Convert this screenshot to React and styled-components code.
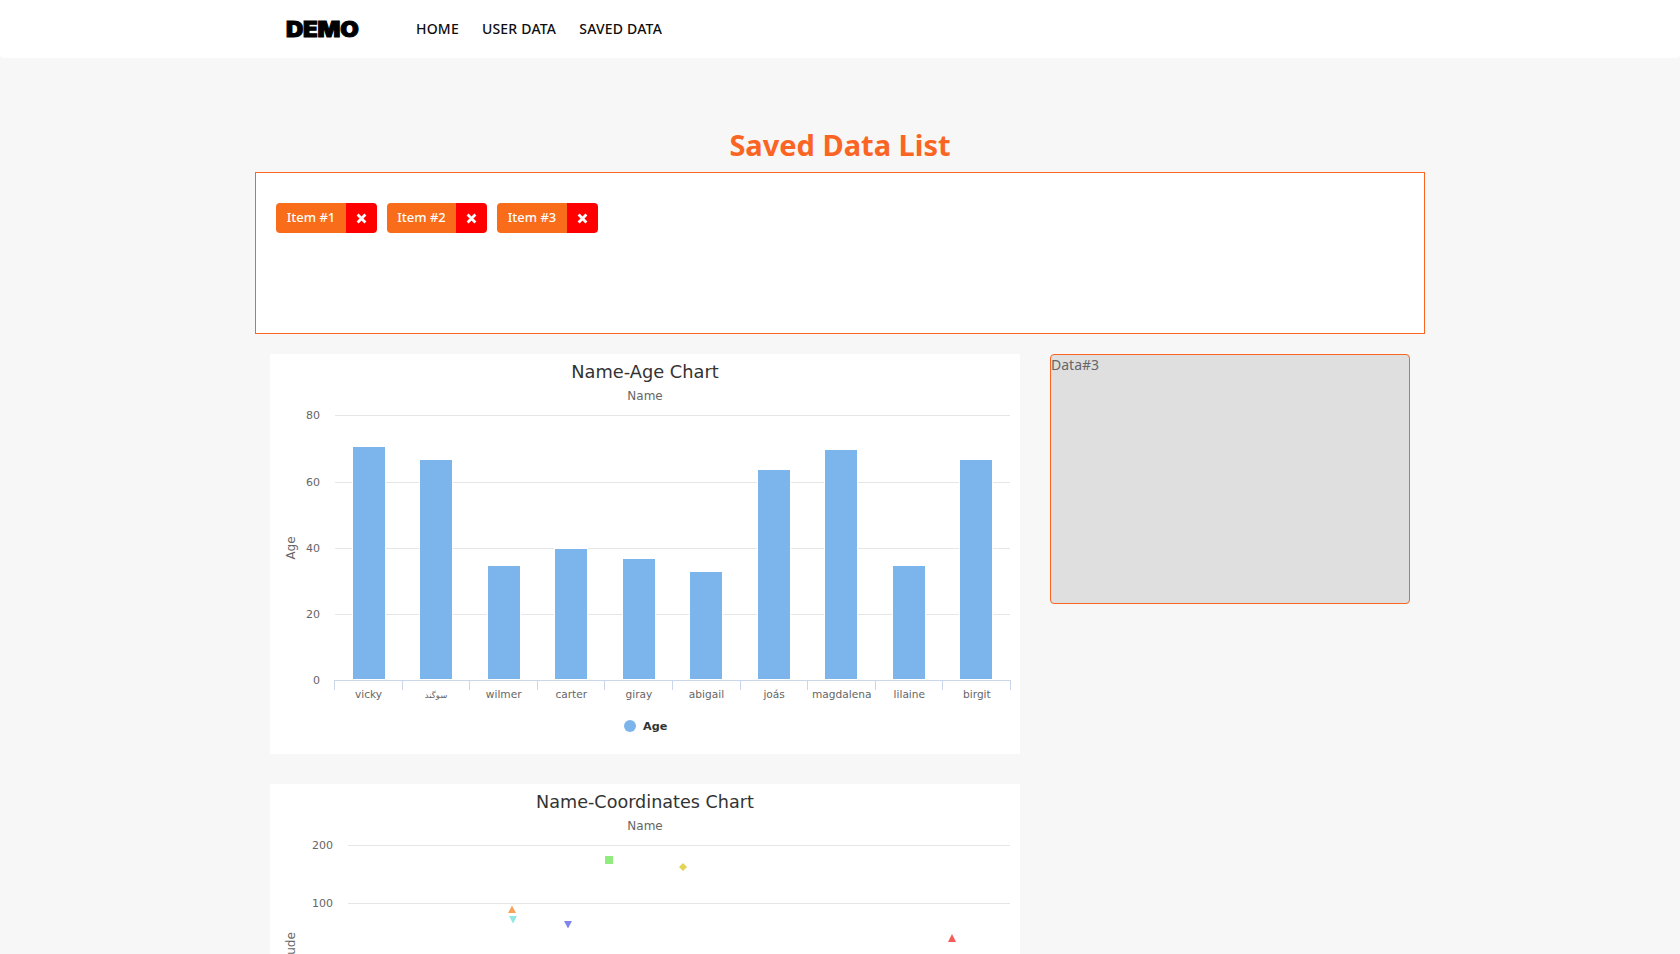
import React from 'react';
import styled, { createGlobalStyle } from 'styled-components';

const Global = createGlobalStyle`
  html { scrollbar-width: none; }
  html::-webkit-scrollbar { display: none; }
  body { margin: 0; background: #f7f7f7; font-family: "Noto Sans", "Open Sans", sans-serif; }
`;

const Navbar = styled.nav`
  height: 58px;
  background: #fff;
  border-radius: 0 0 4px 4px;
`;
const NavInner = styled.div`
  width: 1170px;
  height: 100%;
  margin: 0 auto;
  display: flex;
  align-items: center;
`;
const Brand = styled.div`
  width: 149.5px;
  padding: 2px 0 0 31px;
  box-sizing: border-box;
  font-family: "Inter", sans-serif;
  font-weight: 900;
  font-size: 21px;
  line-height: 22px;
  letter-spacing: -0.2px;
  color: #000;
  -webkit-text-stroke: 1px #000;
  transform-origin: 31px 50%;
  transform: scaleX(1.14);
`;
const NavLink = styled.a`
  padding: 0 11.5px 2px;
  font-size: 14px;
  font-weight: 500;
  letter-spacing: 0.2px;
  color: #0d0d0d;
  white-space: nowrap;
`;
const Container = styled.main`
  width: 1170px;
  margin: 0 auto;
`;
const Title = styled.h1`
  margin: 0;
  padding-top: 64px;
  height: 50px;
  text-align: center;
  font-size: 29px;
  line-height: 46px;
  font-weight: 700;
  color: #fb6524;
  box-sizing: content-box;
`;
const ListBox = styled.section`
  border: 1px solid #fb6524;
  background: #fff;
  padding: 30px 20px;
  box-sizing: border-box;
  height: 162px;
  display: flex;
  align-items: flex-start;
  gap: 10px;
`;
const Chip = styled.div`
  display: flex;
  height: 30px;
  border-radius: 4px;
  overflow: hidden;
`;
const ChipLabel = styled.span`
  width: ${(p) => p.$w}px;
  background: #f86c1a;
  color: #fff;
  font-size: 13px;
  font-weight: 500;
  line-height: 29px;
  text-align: center;
`;
const ChipClose = styled.span`
  width: 31px;
  background: #ff0000;
  display: flex;
  align-items: center;
  justify-content: center;
`;
const Row = styled.div`
  display: flex;
  margin-top: 20px;
  padding: 0 15px;
  gap: 30px;
  align-items: flex-start;
`;
const Charts = styled.div`
  width: 750px;
  display: flex;
  flex-direction: column;
  gap: 30px;
`;
const ChartCard = styled.div`
  height: 400px;
  background: #fff;
  svg { display: block; }
  text { font-family: "DejaVu Sans", sans-serif; }
`;
const DataBox = styled.aside`
  width: 360px;
  height: 250px;
  box-sizing: border-box;
  background: #dfdfdf;
  border: 1px solid #fb6524;
  border-radius: 4px;
  font-size: 14px;
  line-height: 19px;
  color: #666;
`;

const CloseIcon = () => (
  <svg width="11" height="11" viewBox="0 0 11 11">
    <path d="M1.6 1.6 L9.4 9.4 M9.4 1.6 L1.6 9.4" stroke="#fff" strokeWidth="2.8" />
  </svg>
);

const bars = [
  { name: 'vicky', x: 353, top: 447, size: 10.6 },
  { name: 'سوگند', x: 420, top: 460, size: 8.5 },
  { name: 'wilmer', x: 488, top: 566, size: 10.6 },
  { name: 'carter', x: 555, top: 549, size: 10.6 },
  { name: 'giray', x: 623, top: 559, size: 10.6 },
  { name: 'abigail', x: 690, top: 572, size: 10.6 },
  { name: 'joás', x: 758, top: 470, size: 10.6 },
  { name: 'magdalena', x: 825, top: 450, size: 10.6 },
  { name: 'lilaine', x: 893, top: 566, size: 10.6 },
  { name: 'birgit', x: 960, top: 460, size: 10.6 },
];

const OX = 270;
const AgeChart = () => {
  const oy = 354;
  const ticks = [[80, 415], [60, 482], [40, 548], [20, 614], [0, 680]];
  return (
    <svg width="750" height="400" viewBox={`${OX} ${oy} 750 400`}>
      <text x="645" y="377.5" textAnchor="middle" fontSize="17.8" fill="#333">Name-Age Chart</text>
      <text x="645" y="399.5" textAnchor="middle" fontSize="12" fill="#666">Name</text>
      {ticks.map(([v, y]) => (
        <g key={v}>
          {v !== 0 && <line x1="335" x2="1010" y1={y + 0.5} y2={y + 0.5} stroke="#e6e6e6" />}
          <text x="320" y={y + 4} textAnchor="end" fontSize="11" fill="#666">{v}</text>
        </g>
      ))}
      <text transform="translate(295 548) rotate(-90)" textAnchor="middle" fontSize="12" fill="#666">Age</text>
      {bars.map((b) => (
        <rect key={b.name} x={b.x - 0.5} y={b.top - 0.5} width="33" height={680 - b.top} fill="#7cb5ec" stroke="#fff" />
      ))}
      <line x1="334" x2="1011" y1="680.5" y2="680.5" stroke="#ccd6eb" />
      {Array.from({ length: 11 }, (_, i) => {
        const x = Math.round(334 + i * 67.6) + 0.5;
        return <line key={i} x1={x} x2={x} y1="680" y2="690" stroke="#ccd6eb" />;
      })}
      {bars.map((b, i) => (
        <text key={b.name} x={368.5 + i * 67.6} y="698" textAnchor="middle" fontSize={b.size} fill="#666">{b.name}</text>
      ))}
      <circle cx="630" cy="726" r="6" fill="#7cb5ec" />
      <text x="643" y="730" fontSize="11.2" fontWeight="700" fill="#333">Age</text>
    </svg>
  );
};

const CoordChart = () => {
  const oy = 784;
  return (
    <svg width="750" height="400" viewBox={`${OX} ${oy} 750 400`}>
      <text x="645" y="807.5" textAnchor="middle" fontSize="17.6" fill="#333">Name-Coordinates Chart</text>
      <text x="645" y="829.5" textAnchor="middle" fontSize="12" fill="#666">Name</text>
      {[[200, 845], [100, 903], [0, 961], [-100, 1019], [-200, 1077]].map(([v, y]) => (
        <g key={v}>
          <line x1="348" x2="1010" y1={y + 0.5} y2={y + 0.5} stroke="#e6e6e6" />
          <text x="333" y={y + 4} textAnchor="end" fontSize="11" fill="#666">{v}</text>
        </g>
      ))}
      <text transform="translate(295 962) rotate(-90)" textAnchor="middle" fontSize="12" fill="#666">Longitude</text>
      <path d="M605 856h8v8h-8z" fill="#90ed7d" />
      <path d="M512 905.5l4 7.5h-8z" fill="#f7a35c" />
      <path d="M509 916h8l-4 7.5z" fill="#91e8e1" />
      <path d="M564 921h8l-4 7.5z" fill="#8085e9" />
      <path d="M683 863l4 4-4 4-4-4z" fill="#e4d354" />
      <path d="M952 934l4 8h-8z" fill="#f45b5b" />
    </svg>
  );
};

export default function App() {
  return (
    <>
      <Global />
      <Navbar>
        <NavInner>
          <Brand>DEMO</Brand>
          <NavLink>HOME</NavLink>
          <NavLink>USER DATA</NavLink>
          <NavLink>SAVED DATA</NavLink>
        </NavInner>
      </Navbar>
      <Container>
        <Title>Saved Data List</Title>
        <ListBox>
          {[['Item #1', 70], ['Item #2', 69], ['Item #3', 70]].map(([t, w]) => (
            <Chip key={t}>
              <ChipLabel $w={w}>{t}</ChipLabel>
              <ChipClose><CloseIcon /></ChipClose>
            </Chip>
          ))}
        </ListBox>
        <Row>
          <Charts>
            <ChartCard><AgeChart /></ChartCard>
            <ChartCard><CoordChart /></ChartCard>
          </Charts>
          <DataBox>Data#3</DataBox>
        </Row>
      </Container>
    </>
  );
}
